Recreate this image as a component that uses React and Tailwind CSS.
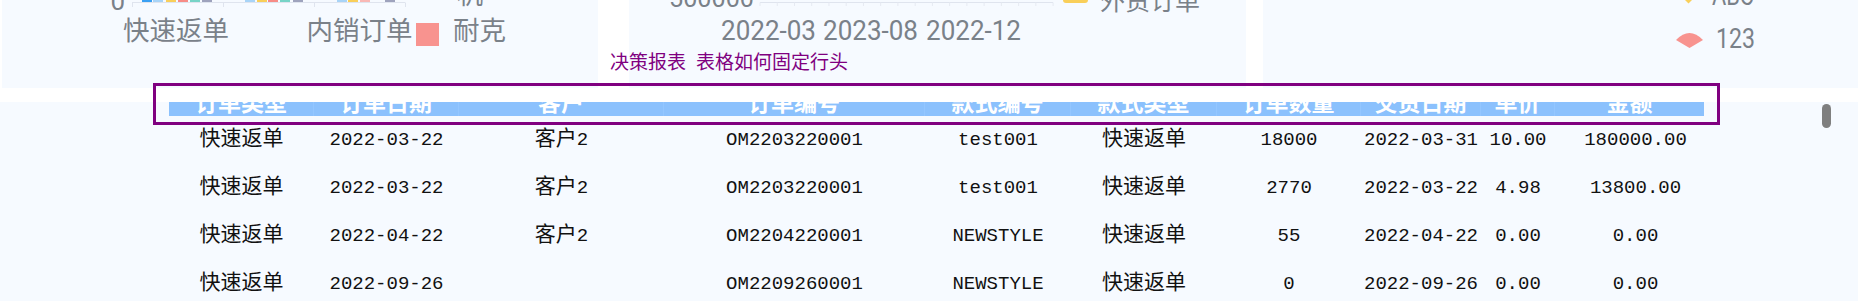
import React from 'react';

const GRAY = '#7a8189';
const CHART_FONT = "Roboto, 'Noto Sans CJK SC', sans-serif";

const columns = ['订单类型', '订单日期', '客户', '订单编号', '款式编号', '款式类型', '订单数量', '交货日期', '单价', '金额'];

const rows = [
  ['快速返单', '2022-03-22', '客户2', 'OM2203220001', 'test001', '快速返单', '18000', '2022-03-31', '10.00', '180000.00'],
  ['快速返单', '2022-03-22', '客户2', 'OM2203220001', 'test001', '快速返单', '2770', '2022-03-22', '4.98', '13800.00'],
  ['快速返单', '2022-04-22', '客户2', 'OM2204220001', 'NEWSTYLE', '快速返单', '55', '2022-04-22', '0.00', '0.00'],
  ['快速返单', '2022-09-26', '', 'OM2209260001', 'NEWSTYLE', '快速返单', '0', '2022-09-26', '0.00', '0.00'],
];

const grid = 'grid grid-cols-[145px_145px_205px_261px_146px_146px_144px_120px_74px_149px]';

// split a cell into CJK / latin runs so the CJK part gets its own size
function Cell({ text }) {
  const parts = text.split(/([\u4e00-\u9fff]+)/).filter(Boolean);
  return parts.map((p, i) =>
    /[\u4e00-\u9fff]/.test(p) ? (
      <span key={i} className="text-[21px]">{p}</span>
    ) : (
      <span key={i}>{p}</span>
    )
  );
}

function LeftChart() {
  const bars = [
    [140, '#3aa0f3'], [151, '#a8d4f7'], [164, '#f9cf5a'], [176, '#f78c87'], [188, '#77d4c7'], [200, '#9ea3bd'],
    [243, '#a8d4f7'], [255, '#f9cf5a'], [266, '#f78c87'], [278, '#77d4c7'], [291, '#9ea3bd'],
    [335, '#a8d4f7'], [346, '#f9cf5a'], [358, '#f9b8b5'], [383, '#9ea3bd'],
  ];
  return (
    <svg width="596" height="88" className="block" fontFamily={CHART_FONT}>
      <text x="123" y="9.5" fontSize="26" fill={GRAY} textAnchor="end">0</text>
      <line x1="130" x2="403" y1="2.5" y2="2.5" stroke="#dfe4ee" />
      {[130.5, 221.5, 312.5, 403.5].map((x) => (
        <line key={x} x1={x} x2={x} y1="2.5" y2="7" stroke="#dfe4ee" />
      ))}
      {bars.map(([x, c]) => (
        <rect key={x} x={x} y="0" width="10" height="2" fill={c} />
      ))}
      <text x="455" y="4" fontSize="26" fill={GRAY}>机</text>
      <text x="174" y="40" fontSize="26.5" fill={GRAY} textAnchor="middle">快速返单</text>
      <text x="357.5" y="40" fontSize="26.5" fill={GRAY} textAnchor="middle">内销订单</text>
      <rect x="414" y="23" width="23" height="23" fill="#f8938f" />
      <text x="451" y="40" fontSize="26.5" fill={GRAY}>耐克</text>
    </svg>
  );
}

function MiddleChart() {
  const ticks = Array.from({ length: 18 }, (_, i) => 131 + i * 17.24);
  return (
    <svg width="617" height="88" className="block" fontFamily={CHART_FONT}>
      <text x="125" y="7" fontSize="26" fill={GRAY} textAnchor="end" textLength="92" lengthAdjust="spacingAndGlyphs">-500000</text>
      <line x1="131" x2="424" y1="2.5" y2="2.5" stroke="#dfe4ee" />
      {ticks.map((x) => (
        <line key={x} x1={x} x2={x} y1="2.5" y2="6" stroke="#e6eaf2" />
      ))}
      <rect x="434" y="-8" width="25" height="11" rx="3" fill="#f9cf5a" />
      <text x="471" y="9.5" fontSize="25" fill={GRAY}>外贸订单</text>
      {[['2022-03', 139.5], ['2023-08', 241.5], ['2022-12', 344.5]].map(([t, x]) => (
        <text key={t} x={x} y="39.5" fontSize="27" fill={GRAY} textAnchor="middle" textLength="95" lengthAdjust="spacingAndGlyphs">{t}</text>
      ))}
    </svg>
  );
}

function RightChart() {
  return (
    <svg width="595" height="88" className="block" fontFamily={CHART_FONT}>
      <polygon points="425.5,-13.5 434,-5 425.5,3.5 417,-5" fill="#f9cf5a" />
      <text x="449" y="4.5" fontSize="27" fill={GRAY} textLength="42" lengthAdjust="spacingAndGlyphs">ABC</text>
      <path d="M413 40 Q426.5 26 440 40 L426.5 48 Z" fill="#f8938f" />
      <text x="453" y="48" fontSize="27" fill={GRAY} textLength="39" lengthAdjust="spacingAndGlyphs">123</text>
    </svg>
  );
}

export default function App() {
  return (
    <div className="relative w-[1858px] h-[301px] overflow-hidden bg-white flex flex-col">
      {/* chart panels */}
      <div className="flex h-[88px] shrink-0">
        <div className="ml-[2px] w-[596px] bg-[#f6faff]">
          <LeftChart />
        </div>
        <div className="ml-[31px] w-[617px] bg-[#f6faff]">
          <MiddleChart />
        </div>
        <div className="ml-[17px] flex-1 bg-[#f6faff]">
          <RightChart />
        </div>
      </div>

      <div className="h-[14px] shrink-0" />

      {/* table */}
      <div className="flex-1 flex bg-[#f6faff] pl-[169px]">
        <div className="w-[1535px]">
          <div className={`${grid} h-[14px] bg-[#8bc1fd] overflow-hidden`}>
            {columns.map((c, i) => (
              <div key={c} className={`flex justify-center ${i < columns.length - 1 ? 'border-r border-[#93c6ff]' : ''}`}>
                <span className="block -mt-[12px] h-[23px] leading-[23px] text-[23px] font-bold text-white font-['Noto_Sans_CJK_SC',sans-serif]">
                  {c}
                </span>
              </div>
            ))}
          </div>
          {rows.map((r, ri) => (
            <div key={ri} className={`${grid} h-[48px] items-center text-[19px] text-[#111] font-['Liberation_Mono','Noto_Sans_CJK_SC',monospace]`}>
              {r.map((v, ci) => (
                <div key={ci} className={`text-center whitespace-nowrap ${ci === 9 ? 'pl-[12px]' : ''}`}>
                  <Cell text={v} />
                </div>
              ))}
            </div>
          ))}
        </div>
        <div className="ml-[118px] mt-[2px] w-[9px] h-[24px] rounded-full bg-[#7f7f7f]" />
      </div>

      {/* question overlay */}
      <div className="absolute left-[610px] top-[51px] flex gap-[10px] text-[19px] leading-[19px] text-[#800080] whitespace-nowrap font-['Noto_Sans_CJK_SC',sans-serif]">
        <span>决策报表</span>
        <span>表格如何固定行头</span>
      </div>
      <div className="absolute left-[153px] top-[83px] w-[1567px] h-[42px] border-[3px] border-[#800080] pointer-events-none" />
    </div>
  );
}
